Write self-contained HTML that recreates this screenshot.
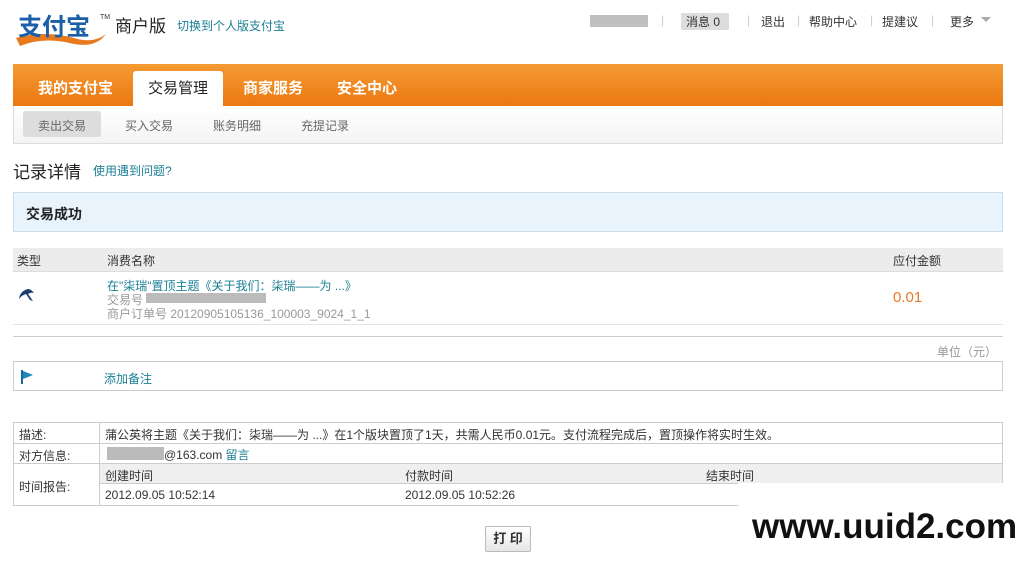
<!DOCTYPE html>
<html><head><meta charset="utf-8"><style>
*{margin:0;padding:0;box-sizing:border-box}
body{width:1034px;height:575px;background:#fff;font-family:"Liberation Sans","Noto Sans CJK SC",sans-serif;font-size:12px;color:#333;position:relative;overflow:hidden}
.a{position:absolute;white-space:nowrap}
.teal{color:#1b7f95}
.gray{color:#999}
.sep{color:#ccc}
</style></head><body>
<div class="a" style="left:14px;top:8px;width:100px;height:40px">
<svg width="100" height="40" viewBox="0 0 100 40"><path d="M2 30 Q30 22 60 30 Q80 36 92 26 Q82 40 60 36 Q30 28 6 38Z" fill="#e87a1e"/><text x="4" y="27" font-size="24" font-weight="bold" fill="#1a5fa8" font-family="Noto Sans CJK SC,sans-serif">支付宝</text><text x="86" y="11" font-size="7" fill="#333">TM</text></svg></div>
<div class="a" style="left:115px;top:12px;font-size:17px;color:#222">商户版</div>
<div class="a teal" style="left:177px;top:17px;font-size:12px">切换到个人版支付宝</div>
<div class="a" style="left:590px;top:15px;width:58px;height:12px;background:#c0c0c0"></div>
<div class="a sep" style="left:661px;top:13px">|</div>
<div class="a" style="left:681px;top:13px;width:48px;height:17px;background:#ddd;border-radius:2px"></div>
<div class="a" style="left:686px;top:13px;font-size:12px;color:#333">消息 0</div>
<div class="a sep" style="left:747px;top:13px">|</div>
<div class="a" style="left:761px;top:13px">退出</div>
<div class="a sep" style="left:797px;top:13px">|</div>
<div class="a" style="left:809px;top:13px">帮助中心</div>
<div class="a sep" style="left:870px;top:13px">|</div>
<div class="a" style="left:882px;top:13px">提建议</div>
<div class="a sep" style="left:931px;top:13px">|</div>
<div class="a" style="left:950px;top:13px">更多</div>
<div class="a" style="left:981px;top:17px;width:0;height:0;border-left:5px solid transparent;border-right:5px solid transparent;border-top:5px solid #aaa"></div>
<div class="a" style="left:13px;top:64px;width:990px;height:42px;background:linear-gradient(#f49a33,#ec7812)"></div>
<div class="a" style="left:133px;top:71px;width:90px;height:35px;background:#fff;border-radius:3px 3px 0 0"></div>
<div class="a" style="left:38px;top:77px;font-size:15px;font-weight:bold;color:#fff">我的支付宝</div>
<div class="a" style="left:148px;top:77px;font-size:15px;color:#222">交易管理</div>
<div class="a" style="left:243px;top:77px;font-size:15px;font-weight:bold;color:#fff">商家服务</div>
<div class="a" style="left:337px;top:77px;font-size:15px;font-weight:bold;color:#fff">安全中心</div>
<div class="a" style="left:13px;top:106px;width:990px;height:38px;border:1px solid #ddd;border-top:none;background:linear-gradient(#fff,#f4f4f4)"></div>
<div class="a" style="left:23px;top:111px;width:78px;height:26px;background:#ddd;border-radius:3px"></div>
<div class="a" style="left:38px;top:117px;color:#666">卖出交易</div>
<div class="a" style="left:125px;top:117px;color:#666">买入交易</div>
<div class="a" style="left:213px;top:117px;color:#666">账务明细</div>
<div class="a" style="left:301px;top:117px;color:#666">充提记录</div>
<div class="a" style="left:13px;top:158px;font-size:17px;color:#222">记录详情</div>
<div class="a teal" style="left:93px;top:162px">使用遇到问题?</div>
<div class="a" style="left:13px;top:192px;width:990px;height:40px;background:#e8f3fb;border:1px solid #c8dde9"></div>
<div class="a" style="left:26px;top:204px;font-size:14px;font-weight:bold;color:#222">交易成功</div>
<div class="a" style="left:13px;top:248px;width:990px;height:24px;background:#ececec;border-bottom:1px solid #ddd"></div>
<div class="a" style="left:17px;top:252px">类型</div>
<div class="a" style="left:107px;top:252px">消费名称</div>
<div class="a" style="left:893px;top:252px">应付金额</div>
<svg class="a" style="left:16px;top:287px" width="20" height="18"><path d="M12 2 Q4 4 3 12 Q6 8 10 7 L14 13 L17 14 L12 7 Q15 5 18 6 Q15 2 12 2Z" fill="#1a3d6e"/></svg>
<div class="a teal" style="left:107px;top:277px">在"柒瑞"置顶主题《关于我们：柒瑞——为 ...》</div>
<div class="a gray" style="left:107px;top:291px">交易号</div>
<div class="a" style="left:146px;top:293px;width:120px;height:10px;background:#bbb"></div>
<div class="a gray" style="left:107px;top:305px">商户订单号 20120905105136_100003_9024_1_1</div>
<div class="a" style="left:893px;top:289px;font-size:15px;color:#e8782a">0.01</div>
<div class="a" style="left:13px;top:324px;width:990px;height:1px;background:#e5e5e5"></div>
<div class="a" style="left:13px;top:336px;width:990px;height:1px;background:#ccc"></div>
<div class="a gray" style="left:937px;top:343px">单位（元）</div>
<div class="a" style="left:13px;top:361px;width:990px;height:30px;border:1px solid #ccc"></div>
<svg class="a" style="left:20px;top:369px" width="16" height="16"><path d="M2 1V15" stroke="#1a6d9a" stroke-width="2"/><path d="M3 2L13 6L3 10Z" fill="#1e87bd"/></svg>
<div class="a teal" style="left:104px;top:370px">添加备注</div>
<div class="a" style="left:13px;top:422px;width:990px;height:84px;border:1px solid #ccc"></div>
<div class="a" style="left:99px;top:422px;width:1px;height:84px;background:#ccc"></div>
<div class="a" style="left:13px;top:443px;width:990px;height:1px;background:#ccc"></div>
<div class="a" style="left:13px;top:463px;width:990px;height:1px;background:#ccc"></div>
<div class="a" style="left:100px;top:464px;width:902px;height:20px;background:#efefef;border-bottom:1px solid #ccc"></div>
<div class="a" style="left:19px;top:426px">描述:</div>
<div class="a" style="left:105px;top:426px">蒲公英将主题《关于我们：柒瑞——为 ...》在1个版块置顶了1天，共需人民币0.01元。支付流程完成后，置顶操作将实时生效。</div>
<div class="a" style="left:19px;top:447px">对方信息:</div>
<div class="a" style="left:107px;top:447px;width:57px;height:13px;background:#bbb"></div>
<div class="a" style="left:164px;top:446px">@163.com <span class="teal">留言</span></div>
<div class="a" style="left:19px;top:478px">时间报告:</div>
<div class="a" style="left:105px;top:467px">创建时间</div>
<div class="a" style="left:405px;top:467px">付款时间</div>
<div class="a" style="left:706px;top:467px">结束时间</div>
<div class="a" style="left:105px;top:488px">2012.09.05 10:52:14</div>
<div class="a" style="left:405px;top:488px">2012.09.05 10:52:26</div>
<div class="a" style="left:485px;top:526px;width:46px;height:26px;border:1px solid #bbb;border-radius:2px;background:linear-gradient(#fff,#e6e6e6);font-weight:bold;font-size:13px;text-align:center;line-height:24px;color:#333">打 印</div>
<div class="a" style="left:738px;top:483px;width:296px;height:92px;background:#fff"></div>
<div class="a" style="left:752px;top:507px;font-size:35px;font-weight:bold;color:#111;font-family:'Liberation Sans',sans-serif;letter-spacing:0px">www.uuid2.com</div>
</body></html>
